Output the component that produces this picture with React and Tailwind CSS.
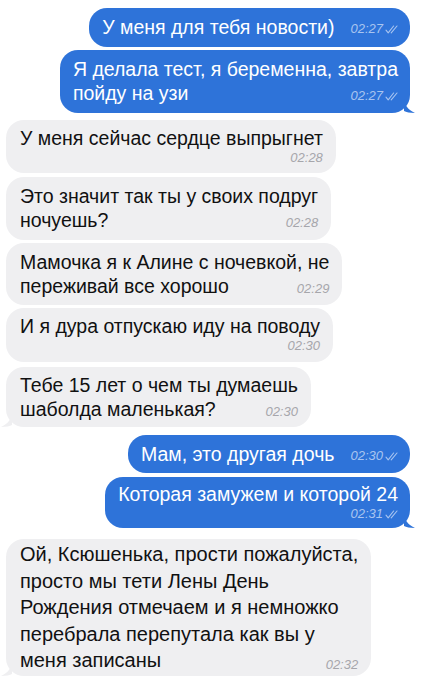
import React from "react";

const FONT = { fontFamily: '"Liberation Sans", Arial, sans-serif' };

const messages = [
  { me: true, lines: ["У меня для тебя новости)"], time: "02:27", mode: "inline", cls: "mt-[8px] pt-[7px] pb-[8px] pl-[13px] pr-[12px]" },
  { me: true, lines: ["Я делала тест, я беременна, завтра", "пойду на узи"], time: "02:27", mode: "last", tail: true, cls: "mt-[3px] pt-[7px] pb-[8px] pl-[13px] pr-[12px]" },
  { me: false, lines: ["У меня сейчас сердце выпрыгнет"], time: "02:28", mode: "below", cls: "mt-[7px] pt-[6px] pb-[7px]" },
  { me: false, lines: ["Это значит так ты у своих подруг", "ночуешь?"], time: "02:28", mode: "last", cls: "mt-[4px] pt-[7px] pb-[8px]" },
  { me: false, lines: ["Мамочка я к Алине с ночевкой, не", "переживай все хорошо"], time: "02:29", mode: "last", cls: "mt-[3px] pt-[7px] pb-[7px]" },
  { me: false, lines: ["И я дура отпускаю иду на поводу"], time: "02:30", mode: "below", cls: "mt-[3px] pt-[6px] pb-[8px]" },
  { me: false, lines: ["Тебе 15 лет о чем ты думаешь", "шаболда маленькая?"], time: "02:30", mode: "last", tail: true, cls: "mt-[5px] pt-[6px] pb-[6px]" },
  { me: true, lines: ["Мам, это другая дочь"], time: "02:30", mode: "inline", cls: "mt-[8px] pt-[7px] pb-[7px] pl-[13px] pr-[12px]" },
  { me: true, lines: ["Которая замужем и которой 24"], time: "02:31", mode: "below", tail: true, cls: "mt-[4px] pt-[5px] pb-[6px] pl-[13px] pr-[12px]" },
  {
    me: false,
    big: true,
    lines: [
      "Ой, Ксюшенька, прости пожалуйста,",
      "просто мы тети Лены День",
      "Рождения отмечаем и я немножко",
      "перебрала перепутала как вы у",
      "меня записаны",
    ],
    time: "02:32",
    mode: "last",
    tail: true,
    cls: "mt-[11px] pt-[2px] pb-[2px]",
  },
];

function Ticks() {
  return (
    <svg width="13" height="9" viewBox="0 0 13 9" fill="none" className="ml-[2px]">
      <path d="M1 5.2 L3.2 7.8 L8.6 1" stroke="currentColor" strokeWidth="1.1" strokeLinecap="round" strokeLinejoin="round" />
      <path d="M6.2 7.8 L12 1" stroke="currentColor" strokeWidth="1.1" strokeLinecap="round" />
    </svg>
  );
}

function Time({ me, value }) {
  return (
    <span
      className={`flex shrink-0 items-center text-[13px] italic leading-[16px] ${me ? "text-[#a9c5f0]" : "text-[#a6a6ab]"}`}
    >
      {value}
      {me && <Ticks />}
    </span>
  );
}

function Tail({ me }) {
  if (me) {
    return (
      <svg width="12" height="14" viewBox="0 0 12 14" className="absolute bottom-0 right-[-6px]">
        <path d="M0 0 C1 6 3 10 11 14 C6 14 2 13 0 12 Z" fill="#2e73d9" />
      </svg>
    );
  }
  return (
    <svg width="12" height="14" viewBox="0 0 12 14" className="absolute bottom-0 left-[-6px]">
      <path d="M12 0 C11 6 9 10 1 14 C6 14 10 13 12 12 Z" fill="#efeff1" />
    </svg>
  );
}

function Bubble({ m }) {
  const text = m.big ? "text-[20px] leading-[26.5px]" : "text-[19.5px] leading-[24px]";
  const last = m.lines[m.lines.length - 1];
  const head = m.lines.slice(0, -1);
  return (
    <div
      className={`relative w-fit rounded-[18px] ${m.cls} ${
        m.me ? "self-end bg-[#2e73d9] text-white" : "self-start bg-[#efeff1] pl-[14px] pr-[13px] text-[#111]"
      }`}
    >
      <div className={text}>
        {head.map((l) => (
          <div key={l} className="whitespace-nowrap">
            {l}
          </div>
        ))}
        {m.mode === "below" ? (
          <div className="whitespace-nowrap">{last}</div>
        ) : (
          <div className={`flex items-end justify-between whitespace-nowrap ${m.mode === "inline" ? "gap-[16px]" : "gap-[24px]"}`}>
            <span>{last}</span>
            <span className={m.mode === "inline" ? "pb-[2px]" : "pb-[1px]"}>
              <Time me={m.me} value={m.time} />
            </span>
          </div>
        )}
      </div>
      {m.mode === "below" && (
        <div className="flex justify-end">
          <Time me={m.me} value={m.time} />
        </div>
      )}
      {m.tail && <Tail me={m.me} />}
    </div>
  );
}

export default function App() {
  return (
    <div className="h-[681px] w-[440px] overflow-hidden bg-white" style={FONT}>
      <div className="flex flex-col pl-[6px] pr-[30px]">
        {messages.map((m, i) => (
          <Bubble key={i} m={m} />
        ))}
      </div>
    </div>
  );
}
